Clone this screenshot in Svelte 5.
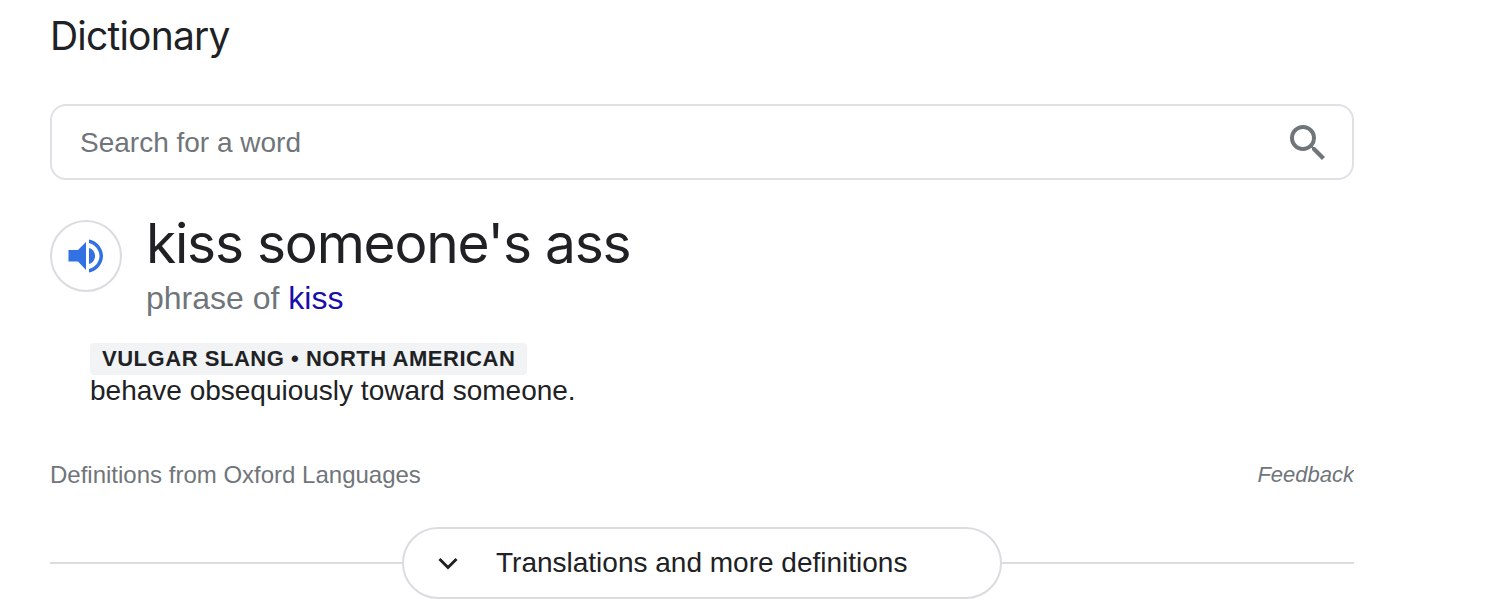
<script>
	let labels = 'VULGAR SLANG • NORTH AMERICAN';
</script>

<main>
	<h2>Dictionary</h2>

	<div class="search">
		<span>Search for a word</span>
		<svg width="48" height="48" viewBox="0 0 24 24" fill="#70757a">
			<path d="M15.5 14h-.79l-.28-.27A6.47 6.47 0 0 0 16 9.5 6.5 6.5 0 1 0 9.5 16c1.61 0 3.09-.59 4.23-1.57l.27.28v.79l5 4.99L20.49 19l-4.99-5zm-6 0C7.01 14 5 11.99 5 9.5S7.01 5 9.5 5 14 7.01 14 9.5 11.99 14 9.5 14z" />
		</svg>
	</div>

	<div class="headword">
		<div class="speaker">
			<svg width="36" height="34" viewBox="0 0 36 34" fill="#3271e4">
				<path d="M.5 11H10L18 3v28l-8-8.500H.5z" />
				<path d="M21 9c4 1 6 4.500 6 8s-2 7-6 8z" />
				<path d="M21 .5c8 1.500 14 8.500 14 16.500s-6 15-14 16.500V30c6-1.500 10.500-7 10.500-13S27 5.500 21 4z" />
			</svg>
		</div>
		<div>
			<div class="word">kiss someone's ass</div>
			<div class="phrase">phrase of <a href="#kiss">kiss</a></div>
		</div>
	</div>

	<div class="sense">
		<span class="label">{labels}</span>
		<div>behave obsequiously toward someone.</div>
	</div>

	<div class="source">
		<span>Definitions from Oxford Languages</span>
		<i>Feedback</i>
	</div>

	<div class="more">
		<button>
			<svg width="24" height="24" viewBox="0 0 24 24" fill="none" stroke="#202124" stroke-width="3">
				<path d="M3.500 8l8.500 8.500L20.500 8" />
			</svg>
			<span>Translations and more definitions</span>
		</button>
	</div>
</main>

<style>
	:global(body) {
		background: #fff;
	}

	main {
		width: 1304px;
		height: 608px;
		margin-left: 50px;
		overflow: hidden;
		font-family: "Liberation Sans", Arial, sans-serif;
		color: #202124;
	}

	h2 {
		margin: 0;
		padding-top: 13px;
		height: 90px;
		box-sizing: border-box;
		font-family: Inter, sans-serif;
		font-weight: 400;
		font-size: 39px;
		letter-spacing: -.8px;
		line-height: 46px;
	}

	.search {
		display: flex;
		align-items: center;
		justify-content: space-between;
		box-sizing: border-box;
		height: 76px;
		margin-top: 14px;
		padding: 2px 20px 0 28px;
		border: 2px solid #dfe1e5;
		border-radius: 16px;
		font-size: 28px;
		color: #70757a;
	}

	.headword {
		display: flex;
		gap: 24px;
		margin-top: 26px;
	}

	.speaker {
		display: flex;
		align-items: center;
		justify-content: center;
		box-sizing: border-box;
		width: 72px;
		height: 72px;
		margin-top: 14px;
		border: 2px solid #dadce0;
		border-radius: 50%;
	}

	.word {
		font-family: Inter, sans-serif;
		font-size: 55px;
		letter-spacing: -1.200px;
		line-height: 72px;
		padding-top: 1px;
		height: 73px;
	}

	.phrase {
		font-size: 32px;
		line-height: 32px;
		padding-top: 2px;
		color: #70757a;
	}

	a {
		color: #1a0dab;
		text-decoration: none;
	}

	.sense {
		margin: 27px 0 0 40px;
		font-size: 28px;
		line-height: 32px;
	}

	.label {
		display: inline-block;
		padding: 0 12px;
		border-radius: 4px;
		background: #f1f3f4;
		font-size: 22px;
		font-weight: 700;
		letter-spacing: .53px;
	}

	.source {
		display: flex;
		justify-content: space-between;
		margin-top: 54px;
		font-size: 24px;
		line-height: 28px;
		color: #70757a;
	}

	.source i {
		font-size: 22px;
	}

	.more {
		display: flex;
		align-items: center;
		justify-content: center;
		margin-top: 38px;
		background: linear-gradient(#dadce0, #dadce0) center / 100% 2px no-repeat;
	}

	button {
		display: flex;
		align-items: center;
		gap: 36px;
		box-sizing: border-box;
		width: 600px;
		height: 72px;
		padding: 0 0 0 32px;
		border: 2px solid #dadce0;
		border-radius: 36px;
		background: #fff;
		font-family: inherit;
		font-size: 28px;
		color: #202124;
	}
</style>
